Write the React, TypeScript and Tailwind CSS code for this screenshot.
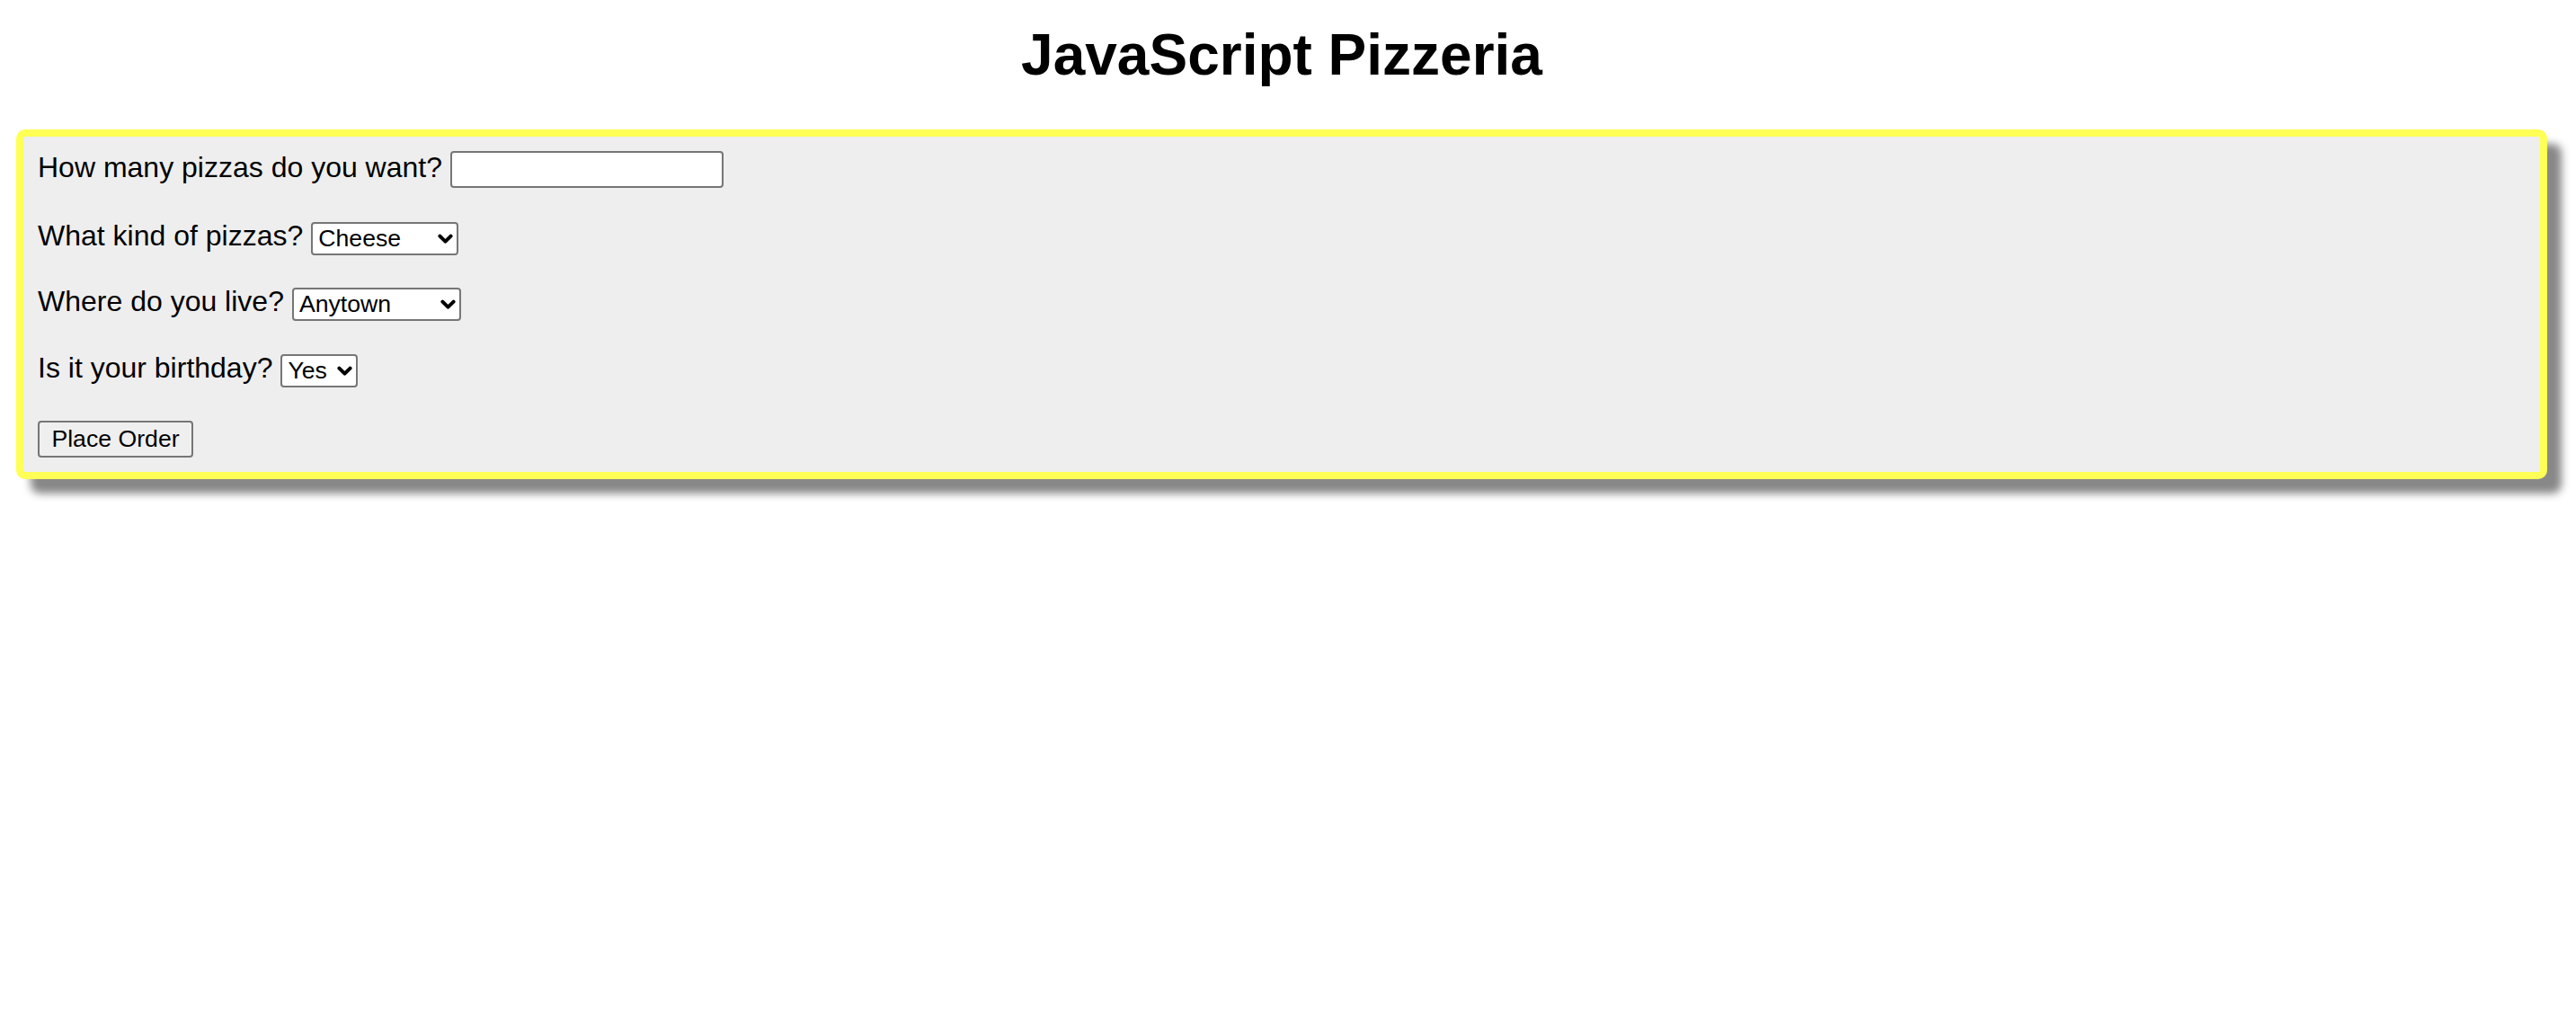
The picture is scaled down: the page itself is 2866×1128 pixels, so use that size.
import React from "react";

const font = { fontFamily: '"Liberation Sans", Arial, sans-serif' };

function Chevron() {
  return (
    <svg
      width="17"
      height="12"
      viewBox="0 0 17 12"
      className="pointer-events-none absolute right-[6px] top-1/2 -translate-y-1/2"
    >
      <path d="M2.4 2.6 L8.5 8.7 L14.6 2.6" fill="none" stroke="#000" strokeWidth="4" strokeLinecap="round" strokeLinejoin="round" />
    </svg>
  );
}

function Select({ width, options }: { width: string; options: string[] }) {
  return (
    <div className={`relative ${width} h-[37px] shrink-0`}>
      <select
        className="h-full w-full appearance-none rounded-[4px] border-2 border-[#767676] bg-white pl-[6px] pr-[28px] text-[26.67px] leading-[31px] text-black outline-none"
        style={font}
        defaultValue={options[0]}
      >
        {options.map((o) => (
          <option key={o}>{o}</option>
        ))}
      </select>
      <Chevron />
    </div>
  );
}

export default function App() {
  return (
    <div className="min-h-screen bg-white text-black" style={font}>
      <div className="ml-[18px] mr-[32px] pt-[24px]">
        <h1 className="text-center text-[64px] font-bold leading-[74px]">JavaScript Pizzeria</h1>
        <form
          className="mt-[46px] rounded-[10px] border-[8px] border-[#ffff55] bg-[#eeeeee] px-[16px] pt-[16px] pb-[16px] shadow-[16px_16px_10px_#888888]"
          onSubmit={(e) => e.preventDefault()}
        >
          <div className="flex items-start gap-[9px]">
            <span className="text-[32px] leading-[37px]">How many pizzas do you want?</span>
            <input
              type="text"
              className="h-[41px] w-[304px] shrink-0 rounded-[4px] border-2 border-[#767676] bg-white px-[4px] text-[26.67px] outline-none"
              style={font}
            />
          </div>
          <div className="mt-[35px] flex items-start gap-[9px]">
            <span className="text-[32px] leading-[37px]">What kind of pizzas?</span>
            <div className="mt-[3px]">
              <Select width="w-[164px]" options={["Cheese", "Pepperoni", "Veggie"]} />
            </div>
          </div>
          <div className="mt-[33px] flex items-start gap-[9px]">
            <span className="text-[32px] leading-[37px]">Where do you live?</span>
            <div className="mt-[3px]">
              <Select width="w-[188px]" options={["Anytown", "Springfield", "Riverside"]} />
            </div>
          </div>
          <div className="mt-[34px] flex items-start gap-[9px]">
            <span className="text-[32px] leading-[37px]">Is it your birthday?</span>
            <div className="mt-[3px]">
              <Select width="w-[86px]" options={["Yes", "No"]} />
            </div>
          </div>
          <div className="mt-[37px] flex">
            <button
              type="submit"
              className="h-[41px] w-[173px] rounded-[4px] border-2 border-[#767676] bg-[#efefef] text-[26.67px] leading-[33px] text-black"
              style={font}
            >
              Place Order
            </button>
          </div>
        </form>
      </div>
    </div>
  );
}
